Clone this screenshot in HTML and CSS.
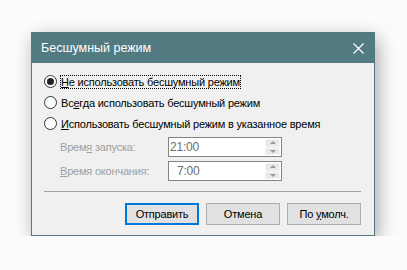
FILE: index.html
```html
<!DOCTYPE html>
<html lang="ru">
<head>
    <meta charset="UTF-8">
    <title>Бесшумный режим</title>
    <link rel="stylesheet" href="styles.css">
</head>
<body>
    <div class="dialog">
        <div class="titlebar">
            <span class="title">Бесшумный режим</span>
            <svg class="close" width="11" height="11" viewBox="0 0 11 11">
                <path d="M0.5 0.5L10.5 10.5M10.5 0.5L0.5 10.5" stroke="#ffffff" stroke-width="1.2"/>
            </svg>
        </div>

        <div class="content">
            <div class="option">
                <span class="radio checked"></span>
                <span class="label focused"><u>Н</u>е использовать бесшумный режим</span>
            </div>
            <div class="option">
                <span class="radio"></span>
                <span class="label">Вс<u>е</u>гда использовать бесшумный режим</span>
            </div>
            <div class="option">
                <span class="radio"></span>
                <span class="label"><u>И</u>спользовать бесшумный режим в указанное время</span>
            </div>

            <div class="field">
                <span class="field-label">Врем<u>я</u> запуска:</span>
                <div class="spin">
                    <span class="spin-value">21:00</span>
                    <div class="spin-buttons">
                        <span class="arrow up"></span>
                        <span class="arrow down"></span>
                    </div>
                </div>
            </div>
            <div class="field">
                <span class="field-label"><u>В</u>ремя окончания:</span>
                <div class="spin">
                    <span class="spin-value indent">7:00</span>
                    <div class="spin-buttons">
                        <span class="arrow up"></span>
                        <span class="arrow down"></span>
                    </div>
                </div>
            </div>

            <div class="separator"></div>

            <div class="buttons">
                <button class="btn default">Отправить</button>
                <button class="btn">Отмена</button>
                <button class="btn">По <u>у</u>молч.</button>
            </div>
        </div>
    </div>
</body>
</html>
```

FILE: styles.css
```css
html {
    background: #fcfcfc;
}

body {
    margin: 0;
    padding: 32px 0 0 31px;
    font-family: "Liberation Sans", Arial, sans-serif;
    font-size: 11px;
    letter-spacing: -0.2px;
    color: #000000;
}

.dialog {
    width: 342px;
    border: 1px solid #527a81;
    background: #f0f0f0;
    box-shadow: 3px 6px 18px rgba(0, 0, 0, 0.35);
}

.titlebar {
    height: 30px;
    background: #527a81;
    display: flex;
    align-items: center;
    justify-content: space-between;
    padding: 0 10px 0 9px;
}

.title {
    color: #ffffff;
    font-size: 12.5px;
    letter-spacing: 0;
}

.close {
    display: block;
}

.content {
    padding: 8px 13px 10px 12px;
}

u {
    text-decoration: underline;
    text-underline-offset: 1px;
}

.option {
    height: 21px;
    display: flex;
    align-items: center;
    white-space: nowrap;
}

.radio {
    width: 11px;
    height: 11px;
    border: 1px solid #333333;
    border-radius: 50%;
    background: #ffffff;
    display: flex;
    align-items: center;
    justify-content: center;
    margin-right: 3px;
    flex-shrink: 0;
}

.radio.checked::after {
    content: "";
    width: 7px;
    height: 7px;
    border-radius: 50%;
    background: #222222;
}

.label {
    padding: 1px 1px;
}

.label.focused {
    outline: 1px dotted #000000;
    outline-offset: -1px;
}

.field {
    display: flex;
    align-items: center;
    height: 20px;
    margin-top: 3px;
    padding-left: 16px;
}

.field + .field {
    margin-top: 4px;
}

.field-label {
    width: 108px;
    color: #a0a0a0;
}

.spin {
    width: 112px;
    height: 18px;
    border: 1px solid #838383;
    background: #ffffff;
    display: flex;
    align-items: center;
    justify-content: space-between;
}

.spin-value {
    color: #6d6d6d;
    font-size: 12px;
    padding-left: 1px;
}

.spin-value.indent {
    padding-left: 8px;
}

.spin-buttons {
    width: 15px;
    height: 16px;
    margin-right: 1px;
    display: flex;
    flex-direction: column;
    gap: 1px;
    background: #f0f0f0;
}

.arrow {
    flex: 1;
    background: #e8e8e8;
    border: 1px solid #f4f4f4;
    display: flex;
    align-items: center;
    justify-content: center;
}

.arrow::after {
    content: "";
    border-left: 3px solid transparent;
    border-right: 3px solid transparent;
}

.arrow.up::after {
    border-bottom: 3px solid #9a9a9a;
}

.arrow.down::after {
    border-top: 3px solid #9a9a9a;
}

.separator {
    height: 1px;
    background: #a0a0a0;
    margin-top: 10px;
}

.buttons {
    display: flex;
    justify-content: flex-end;
    gap: 7px;
    margin-top: 11px;
}

.btn {
    width: 74px;
    height: 22px;
    background: #e1e1e1;
    border: 1px solid #adadad;
    font-family: inherit;
    font-size: 11px;
    letter-spacing: -0.2px;
    color: #000000;
    padding: 0;
}

.btn.default {
    border: 2px solid #0078d7;
}
```
